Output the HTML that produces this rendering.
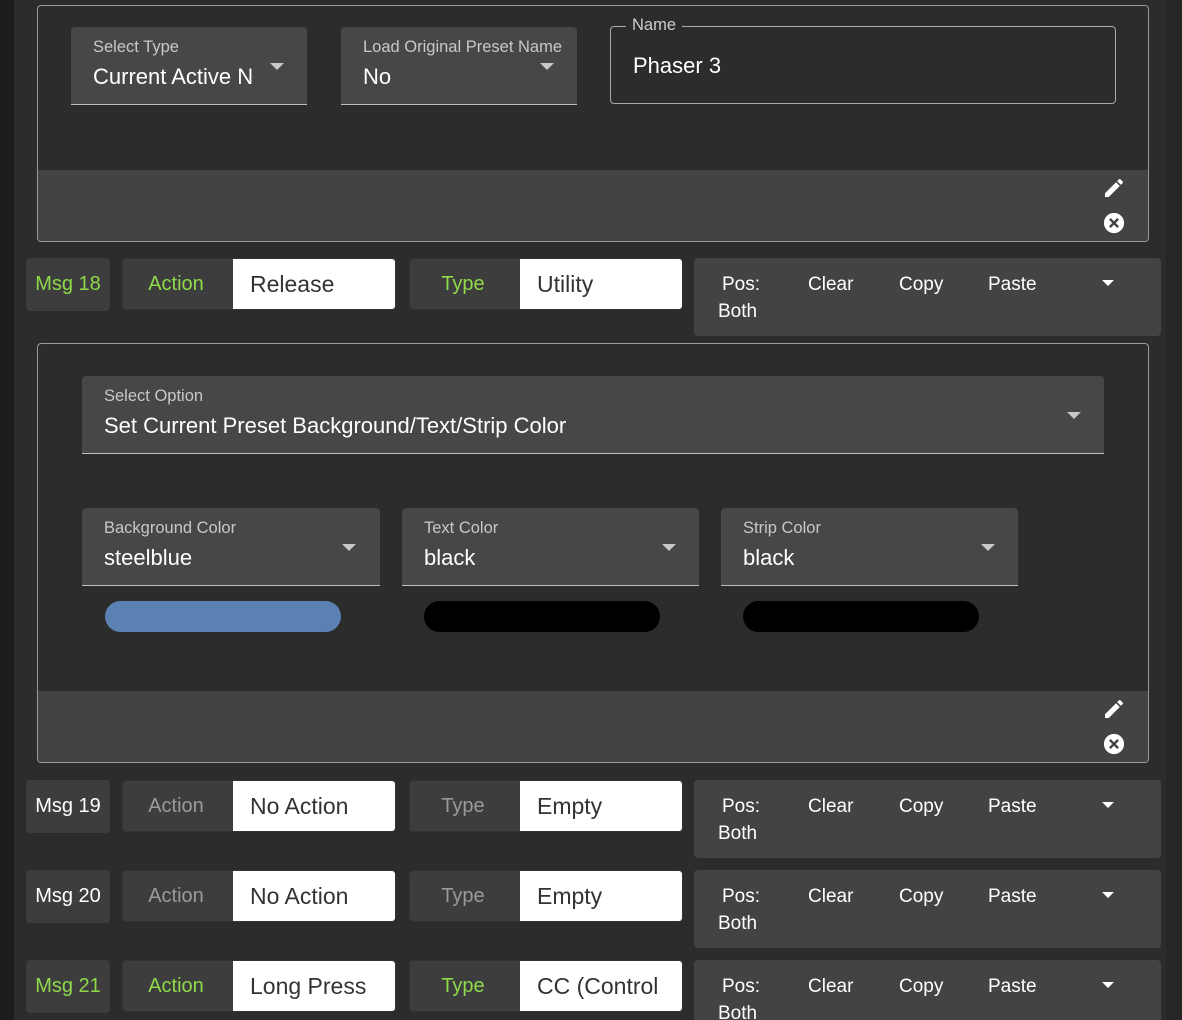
<!DOCTYPE html><html><head><style>
*{box-sizing:border-box;margin:0;padding:0}
html{width:1182px;height:1020px;overflow:hidden}
body{width:1182px;height:1020px;background:#2c2c2c;position:relative;overflow:hidden;font-family:"Liberation Sans",sans-serif;color:#fff}
.a{position:absolute}
.strip{left:0;top:0;width:14px;height:1020px;background:#1c1c1c}
.rstrip{left:1166px;top:0;width:16px;height:1020px;background:#262626}
.panel{border:1px solid #9a9a9a;border-radius:4px;overflow:hidden;left:37px;width:1112px}
.foot{position:absolute;left:0;right:0;bottom:0;height:71px;background:#434343}
.sel{background:#474747;border-bottom:1px solid #bdbdbd;border-radius:4px 4px 0 0}
.sel .l{position:absolute;left:22px;top:11px;font-size:16.5px;color:#c8c8c8}
.sel .v{position:absolute;left:22px;top:37px;font-size:22px;color:#fff;white-space:nowrap;overflow:hidden}
.arr{position:absolute;width:0;height:0;border-left:7px solid transparent;border-right:7px solid transparent;border-top:7px solid #c8c8c8}
.msg{width:84px;height:53px;background:#3d3d3d;border-radius:4px;font-size:20px;text-align:center;line-height:53px}
.grp{height:52px;border-radius:4px;overflow:hidden;display:flex;border:1px solid #333}
.grp .k{width:110px;background:#3d3d3d;font-size:20px;text-align:center;line-height:50px;padding-right:4px}
.grp .w{flex:1;background:#fff;color:#333;font-size:23px;padding-left:17px;line-height:50px}
.g{color:#8fd94a}.d{color:#9a9a9a}
.rp{left:694px;width:467px;height:78px;background:#434343;border-radius:4px;font-size:19px}
.rp span{position:absolute}
</style></head><body>
<div class="a strip"></div><div class="a rstrip"></div>

<div class="a panel" style="top:5px;height:237px">
 <div class="a sel" style="left:33px;top:21px;width:236px;height:78px"><div class="l">Select Type</div><div class="v" style="width:170px">Current Active N</div><div class="arr" style="left:199px;top:36px"></div></div>
 <div class="a sel" style="left:303px;top:21px;width:236px;height:78px"><div class="l" style="white-space:nowrap">Load Original Preset Name</div><div class="v">No</div><div class="arr" style="left:199px;top:36px"></div></div>
 <div class="a" style="left:572px;top:20px;width:506px;height:78px;border:1px solid #aaa;border-radius:4px"></div>
 <div class="a" style="left:588px;top:10px;background:#2c2c2c;padding:0 6px;font-size:16.5px;color:#ccc">Name</div>
 <div class="a" style="left:595px;top:47px;font-size:22px">Phaser 3</div>
 <div class="foot"><svg class="a" style="left:1064px;top:6px" width="24" height="24" viewBox="0 0 24 24"><path fill="#fff" d="M3 17.25V21h3.75L17.81 9.94l-3.750-3.75L3 17.25zM20.71 7.04a1 1 0 000-1.41l-2.34-2.34a1 1 0 00-1.41 0l-1.83 1.83 3.75 3.75 1.83-1.83z"/></svg>
 <svg class="a" style="left:1065px;top:42px" width="22" height="22" viewBox="0 0 24 24"><circle cx="12" cy="12" r="11" fill="#fff"/><path stroke="#434343" stroke-width="2.6" d="M7.5 7.5l9 9M16.5 7.5l-9 9"/></svg></div>
</div>

<div class="a panel" style="top:343px;height:420px">
 <div class="a sel" style="left:44px;top:32px;width:1022px;height:78px"><div class="l">Select Option</div><div class="v">Set Current Preset Background/Text/Strip Color</div><div class="arr" style="left:985px;top:36px"></div></div>
 <div class="a sel" style="left:44px;top:164px;width:298px;height:78px"><div class="l">Background Color</div><div class="v">steelblue</div><div class="arr" style="left:260px;top:36px"></div></div>
 <div class="a sel" style="left:364px;top:164px;width:297px;height:78px"><div class="l">Text Color</div><div class="v">black</div><div class="arr" style="left:260px;top:36px"></div></div>
 <div class="a sel" style="left:683px;top:164px;width:297px;height:78px"><div class="l">Strip Color</div><div class="v">black</div><div class="arr" style="left:260px;top:36px"></div></div>
 <div class="a" style="left:67px;top:257px;width:236px;height:31px;border-radius:16px;background:#5b80b2"></div>
 <div class="a" style="left:386px;top:257px;width:236px;height:31px;border-radius:16px;background:#000"></div>
 <div class="a" style="left:705px;top:257px;width:236px;height:31px;border-radius:16px;background:#000"></div>
 <div class="foot"><svg class="a" style="left:1064px;top:6px" width="24" height="24" viewBox="0 0 24 24"><path fill="#fff" d="M3 17.25V21h3.75L17.81 9.94l-3.75-3.75L3 17.25zM20.71 7.04a1 1 0 000-1.41l-2.34-2.34a1 1 0 00-1.41 0l-1.83 1.83 3.75 3.75 1.83-1.83z"/></svg>
 <svg class="a" style="left:1065px;top:42px" width="22" height="22" viewBox="0 0 24 24"><circle cx="12" cy="12" r="11" fill="#fff"/><path stroke="#434343" stroke-width="2.6" d="M7.5 7.5l9 9M16.5 7.5l-9 9"/></svg></div>
</div>

<div class="a msg g" style="left:26px;top:258px">Msg 18</div>
<div class="a grp" style="left:122px;top:258px;width:274px"><div class="k g">Action</div><div class="w">Release</div></div>
<div class="a grp" style="left:409px;top:258px;width:274px"><div class="k g">Type</div><div class="w">Utility</div></div>
<div class="a rp" style="top:258px"><span style="left:28px;top:16px">Pos:</span><span style="left:24px;top:43px">Both</span><span style="left:114px;top:16px">Clear</span><span style="left:205px;top:16px">Copy</span><span style="left:294px;top:16px">Paste</span><div class="arr" style="left:408px;top:22px;border-top-color:#fff;border-left-width:6px;border-right-width:6px;border-top-width:6px"></div></div>

<div class="a msg" style="left:26px;top:780px">Msg 19</div>
<div class="a grp" style="left:122px;top:780px;width:274px"><div class="k d">Action</div><div class="w">No Action</div></div>
<div class="a grp" style="left:409px;top:780px;width:274px"><div class="k d">Type</div><div class="w">Empty</div></div>
<div class="a rp" style="top:780px"><span style="left:28px;top:16px">Pos:</span><span style="left:24px;top:43px">Both</span><span style="left:114px;top:16px">Clear</span><span style="left:205px;top:16px">Copy</span><span style="left:294px;top:16px">Paste</span><div class="arr" style="left:408px;top:22px;border-top-color:#fff;border-left-width:6px;border-right-width:6px;border-top-width:6px"></div></div>

<div class="a msg" style="left:26px;top:870px">Msg 20</div>
<div class="a grp" style="left:122px;top:870px;width:274px"><div class="k d">Action</div><div class="w">No Action</div></div>
<div class="a grp" style="left:409px;top:870px;width:274px"><div class="k d">Type</div><div class="w">Empty</div></div>
<div class="a rp" style="top:870px"><span style="left:28px;top:16px">Pos:</span><span style="left:24px;top:43px">Both</span><span style="left:114px;top:16px">Clear</span><span style="left:205px;top:16px">Copy</span><span style="left:294px;top:16px">Paste</span><div class="arr" style="left:408px;top:22px;border-top-color:#fff;border-left-width:6px;border-right-width:6px;border-top-width:6px"></div></div>

<div class="a msg g" style="left:26px;top:960px">Msg 21</div>
<div class="a grp" style="left:122px;top:960px;width:274px"><div class="k g">Action</div><div class="w">Long Press</div></div>
<div class="a grp" style="left:409px;top:960px;width:274px"><div class="k g">Type</div><div class="w">CC (Control</div></div>
<div class="a rp" style="top:960px;height:60px;border-radius:4px 4px 0 0"><span style="left:28px;top:16px">Pos:</span><span style="left:24px;top:43px">Both</span><span style="left:114px;top:16px">Clear</span><span style="left:205px;top:16px">Copy</span><span style="left:294px;top:16px">Paste</span><div class="arr" style="left:408px;top:22px;border-top-color:#fff;border-left-width:6px;border-right-width:6px;border-top-width:6px"></div></div>
</body></html>
